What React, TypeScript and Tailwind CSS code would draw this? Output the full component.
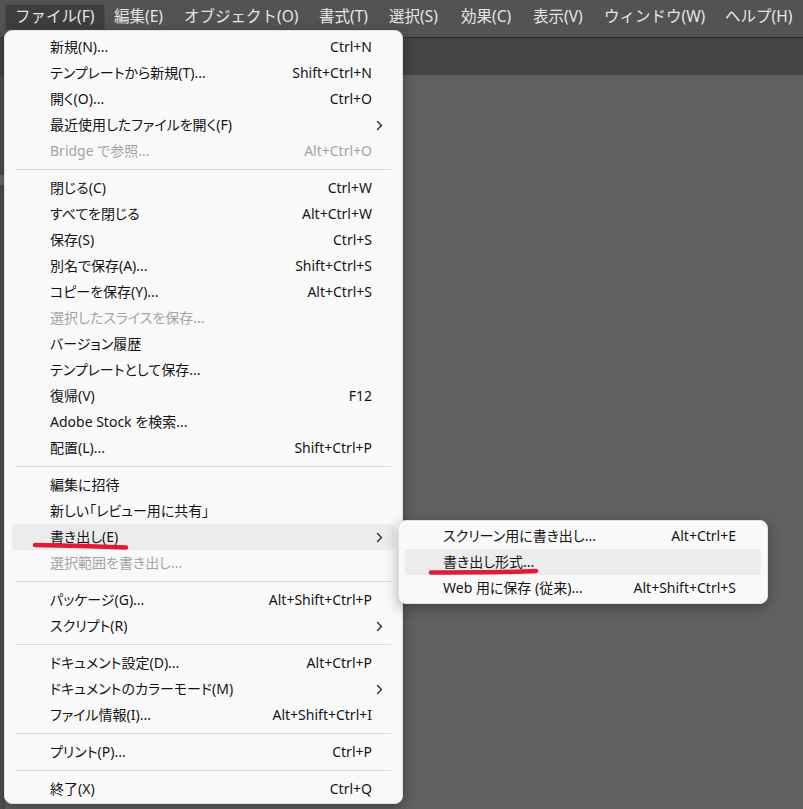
import React from "react";

type Item =
  | { sep: true }
  | {
      sep?: false;
      label: string;
      shortcut?: string;
      arrow?: boolean;
      disabled?: boolean;
      active?: boolean;
    };

const menuItems: Item[] = [
  { label: "新規(N)...", shortcut: "Ctrl+N" },
  { label: "テンプレートから新規(T)...", shortcut: "Shift+Ctrl+N" },
  { label: "開く(O)...", shortcut: "Ctrl+O" },
  { label: "最近使用したファイルを開く(F)", arrow: true },
  { label: "Bridge で参照...", shortcut: "Alt+Ctrl+O", disabled: true },
  { sep: true },
  { label: "閉じる(C)", shortcut: "Ctrl+W" },
  { label: "すべてを閉じる", shortcut: "Alt+Ctrl+W" },
  { label: "保存(S)", shortcut: "Ctrl+S" },
  { label: "別名で保存(A)...", shortcut: "Shift+Ctrl+S" },
  { label: "コピーを保存(Y)...", shortcut: "Alt+Ctrl+S" },
  { label: "選択したスライスを保存...", disabled: true },
  { label: "バージョン履歴" },
  { label: "テンプレートとして保存..." },
  { label: "復帰(V)", shortcut: "F12" },
  { label: "Adobe Stock を検索..." },
  { label: "配置(L)...", shortcut: "Shift+Ctrl+P" },
  { sep: true },
  { label: "編集に招待" },
  { label: "新しい「レビュー用に共有」" },
  { label: "書き出し(E)", arrow: true, active: true },
  { label: "選択範囲を書き出し...", disabled: true },
  { sep: true },
  { label: "パッケージ(G)...", shortcut: "Alt+Shift+Ctrl+P" },
  { label: "スクリプト(R)", arrow: true },
  { sep: true },
  { label: "ドキュメント設定(D)...", shortcut: "Alt+Ctrl+P" },
  { label: "ドキュメントのカラーモード(M)", arrow: true },
  { label: "ファイル情報(I)...", shortcut: "Alt+Shift+Ctrl+I" },
  { sep: true },
  { label: "プリント(P)...", shortcut: "Ctrl+P" },
  { sep: true },
  { label: "終了(X)", shortcut: "Ctrl+Q" },
];

const subItems: Item[] = [
  { label: "スクリーン用に書き出し...", shortcut: "Alt+Ctrl+E" },
  { label: "書き出し形式...", active: true },
  { label: "Web 用に保存 (従来)...", shortcut: "Alt+Shift+Ctrl+S" },
];

const bar = [
  { label: "ファイル(F)", w: "w-[100px]", active: true },
  { label: "編集(E)", w: "w-[70px]" },
  { label: "オブジェクト(O)", w: "w-[135px]" },
  { label: "書式(T)", w: "w-[70px]" },
  { label: "選択(S)", w: "w-[72px]" },
  { label: "効果(C)", w: "w-[72px]" },
  { label: "表示(V)", w: "w-[71px]" },
  { label: "ウィンドウ(W)", w: "w-[121px]" },
  { label: "ヘルプ(H)", w: "w-[87px]" },
];

const Chevron = () => (
  <svg width="7" height="11" viewBox="0 0 7 11" className="block">
    <path d="M1.5 1.5 L5.5 5.5 L1.5 9.5" fill="none" stroke="#2a2a2a" strokeWidth="1.4" strokeLinecap="round" strokeLinejoin="round" />
  </svg>
);

function Row({ item, sub }: { item: Exclude<Item, { sep: true }>; sub?: boolean }) {
  return (
    <div
      className={`h-[26px] flex items-center rounded-[4px] ${sub ? "mx-[6px]" : "mx-[7px]"} pl-[38px] ${
        item.active ? "bg-[#ececec]" : ""
      } ${item.disabled ? "text-[#a3a3a3]" : "text-[#141414]"}`}
    >
      <span className="flex-1 whitespace-nowrap [font-feature-settings:'palt']">{item.label}</span>
      {item.shortcut && <span className={`whitespace-nowrap ${sub ? "pr-[25px]" : "pr-[23px]"}`}>{item.shortcut}</span>}
      {item.arrow && (
        <span className="pr-[12px]">
          <Chevron />
        </span>
      )}
    </div>
  );
}

export default function App() {
  return (
    <div
      className="relative w-[803px] h-[809px] overflow-hidden bg-[#616161]"
      style={{ fontFamily: '"Noto Sans", "Noto Sans CJK JP", sans-serif' }}
    >
      <div className="flex flex-col h-full">
        <div className="h-[37px] bg-[#535353] flex items-start pt-[4px] pl-[5px] text-[15.5px] text-[#e6e6e6]">
          {bar.map((b) => (
            <div
              key={b.label}
              className={`${b.w} shrink-0 h-[26px] flex items-center pl-[9px] whitespace-nowrap ${
                b.active ? "bg-[#3e3e3e] border border-[#4a4a4a]" : ""
              }`}
            >
              {b.label}
            </div>
          ))}
        </div>
        <div className="h-px bg-[#2e2e2e]" />
        <div className="h-[37px] bg-[#444444]" />
        <div className="flex-1 flex">
          <div className="w-[5px] bg-[#4f4f4f] flex flex-col">
            <div className="h-[100px]" />
            <div className="h-[10px] bg-[#6a6a6a]" />
            <div className="flex-1" />
          </div>
          <div className="flex-1 bg-[#616161]" />
        </div>
      </div>

      {/* File menu */}
      <div className="absolute left-[4px] top-[30px] w-[399px] bg-[#f9f9f9] rounded-[8px] border border-[#e2e2e2] shadow-[0_4px_14px_rgba(0,0,0,0.35)] pt-[3px] pb-[1px] text-[14px] leading-[26px]">
        {menuItems.map((it, i) =>
          it.sep ? (
            <div key={i} className="h-[11px] flex items-center px-[11px]">
              <div className="h-px w-full bg-[#d9d9d9]" />
            </div>
          ) : (
            <Row key={i} item={it} />
          )
        )}
      </div>

      {/* Export submenu */}
      <div className="absolute left-[398px] top-[520px] w-[370px] bg-[#f9f9f9] rounded-[8px] border border-[#e2e2e2] shadow-[0_4px_14px_rgba(0,0,0,0.3)] py-[2px] text-[14px] leading-[26px]">
        {subItems.map((it, i) => (it.sep ? null : <Row key={i} item={it} sub />))}
      </div>

      {/* Red annotations */}
      <svg className="absolute inset-0 pointer-events-none" width="803" height="809">
        <path d="M35 545 C 60 545.5, 100 546.5, 126 547.5" fill="none" stroke="#e01b35" strokeWidth="4.5" strokeLinecap="round" />
        <path d="M431 572.5 C 460 572.5, 505 572.5, 536 571" fill="none" stroke="#e01b35" strokeWidth="4.5" strokeLinecap="round" />
      </svg>
    </div>
  );
}
